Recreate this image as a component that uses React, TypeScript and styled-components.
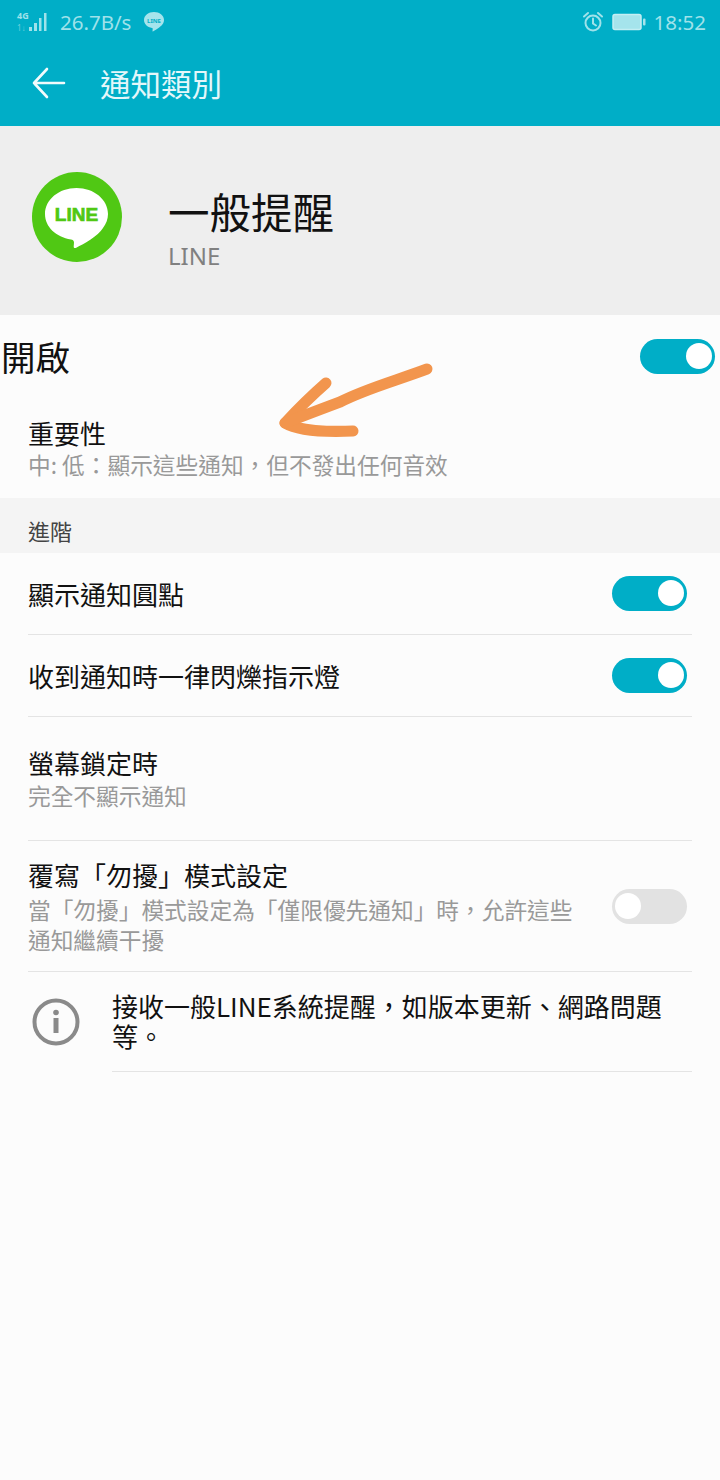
import React from "react";
import styled, { createGlobalStyle } from "styled-components";

const GlobalStyle = createGlobalStyle`
  html, body {
    margin: 0;
    padding: 0;
    background: #fcfcfc;
  }
  * {
    box-sizing: border-box;
  }
`;

const Page = styled.div`
  position: relative;
  width: 720px;
  height: 1480px;
  overflow: hidden;
  background: #fcfcfc;
  font-family: "Noto Sans CJK TC", "Noto Sans", sans-serif;
  color: #111;
`;

const Top = styled.div`
  height: 126px;
  background: #00aec7;
`;

const StatusBar = styled.div`
  height: 44px;
  padding: 0 14px 0 16px;
  display: flex;
  align-items: center;
  justify-content: space-between;
  color: #9fe2ea;
  font-size: 20.5px;
  font-family: "Noto Sans", sans-serif;
`;

const StatusGroup = styled.div<{ $gap: number }>`
  display: flex;
  align-items: center;
  gap: ${(p) => p.$gap}px;
`;

const AppBar = styled.div`
  height: 82px;
  padding: 0 0 4px 32px;
  display: flex;
  align-items: center;
  gap: 34px;
  color: #e4f7fa;
  font-size: 30.5px;
`;

const Header = styled.div`
  height: 189px;
  background: #eeeeee;
  padding: 0 0 8px 32px;
  display: flex;
  align-items: center;
  gap: 46px;
`;

const HeaderText = styled.div`
  display: flex;
  flex-direction: column;
  padding-top: 14px;
`;

const HeaderTitle = styled.div`
  font-size: 41.5px;
  line-height: 58px;
  margin-top: 6px;
`;

const HeaderSub = styled.div`
  font-family: "Noto Sans", sans-serif;
  font-size: 24px;
  line-height: 32px;
  color: #808080;
`;

const EnableRow = styled.div`
  height: 82px;
  padding: 0 5px 0 1px;
  display: flex;
  align-items: center;
  justify-content: space-between;
  font-size: 34.5px;
`;

const PlainRow = styled.div`
  height: 101px;
  padding: 18px 28px 0;
`;

const Section = styled.div`
  height: 55px;
  background: #f4f4f4;
  padding: 15px 28px 0;
  font-size: 22px;
  line-height: 34px;
  color: #444;
`;

const List = styled.div`
  padding: 0 28px;
`;

const Row = styled.div<{ $height: number }>`
  height: ${(p) => p.$height}px;
  padding-right: 5px;
  display: flex;
  align-items: center;
  justify-content: space-between;
  border-bottom: 1px solid #e4e4e4;
`;

const RowText = styled.div<{ $width?: number }>`
  width: ${(p) => (p.$width ? `${p.$width}px` : "auto")};
  margin-top: -1px;
`;

const RowTitle = styled.div`
  font-size: 26px;
  line-height: 36px;
`;

const RowSub = styled.div<{ $gap: number }>`
  font-size: 22.7px;
  line-height: 30px;
  margin-top: ${(p) => p.$gap}px;
  color: #999999;
`;

const SwitchTrack = styled.div<{ $on: boolean }>`
  position: relative;
  width: 75px;
  height: 35px;
  border-radius: 18px;
  flex: none;
  background: ${(p) => (p.$on ? "#00aec7" : "#e2e2e2")};
`;

const SwitchKnob = styled.div<{ $on: boolean }>`
  position: absolute;
  top: 4px;
  left: ${(p) => (p.$on ? "46px" : "3px")};
  width: 26px;
  height: 26px;
  border-radius: 50%;
  background: #fff;
`;

const Info = styled.div`
  padding: 0 28px 0 32px;
  display: flex;
  gap: 32px;
`;

const InfoIcon = styled.div`
  flex: none;
  width: 48px;
  padding-top: 26px;
`;

const InfoText = styled.div`
  flex: 1;
  height: 100px;
  padding-top: 19px;
  font-size: 26px;
  line-height: 30px;
  border-bottom: 1px solid #e4e4e4;
`;

const ArrowMark = styled.svg`
  position: absolute;
  left: 270px;
  top: 355px;
`;

const Switch = ({ on }: { on: boolean }) => (
  <SwitchTrack $on={on}>
    <SwitchKnob $on={on} />
  </SwitchTrack>
);

const SignalIcon = () => (
  <svg width="32" height="24" viewBox="0 0 32 24">
    <text x="1" y="9" fontSize="9" fontWeight="700" fill="#9fe2ea" fontFamily="Noto Sans, sans-serif">4G</text>
    <text x="1" y="21" fontSize="8" fill="#6fd0dc" fontFamily="Noto Sans, sans-serif">1↓</text>
    <rect x="13" y="17" width="3" height="4" fill="#9fe2ea" />
    <rect x="18" y="13" width="3" height="8" fill="#9fe2ea" />
    <rect x="23" y="8" width="2.5" height="13" fill="#9fe2ea" />
    <rect x="28" y="3" width="2.5" height="18" fill="#9fe2ea" />
  </svg>
);

const BubbleIcon = () => (
  <svg width="22" height="22" viewBox="0 0 22 22">
    <path d="M11 1C5.500 1 1 4.500 1 9c0 4 3.400 7.300 8 7.900.6.1.8.5.7 1l-.2 2c0 .5.4.7.9.4 2.800-1.700 8.600-5.300 9.800-8C20.700 11.300 21 10.200 21 9c0-4.500-4.500-8-10-8z" fill="#a5e4ec" />
    <text x="11" y="11.500" textAnchor="middle" fontSize="6" fontWeight="700" fill="#00aec7" fontFamily="Noto Sans, sans-serif">LINE</text>
  </svg>
);

const AlarmIcon = () => (
  <svg width="22" height="22" viewBox="0 0 22 22" fill="none" stroke="#9fe2ea" strokeWidth="2">
    <circle cx="11" cy="12" r="7.500" />
    <path d="M11 7.500V12.500L14 14.500" strokeLinecap="round" />
    <path d="M2 5.500L6 2M20 5.500L16 2" strokeLinecap="round" />
  </svg>
);

const BatteryIcon = () => (
  <svg width="34" height="18" viewBox="0 0 34 18">
    <rect x="1" y="1.500" width="28" height="15" rx="2" fill="#a5e4ec" stroke="#c4eef3" strokeWidth="1.500" />
    <rect x="31" y="5.500" width="2.500" height="7" rx="1" fill="#a5e4ec" />
  </svg>
);

const BackArrow = () => (
  <svg width="34" height="34" viewBox="0 0 34 34" fill="none" stroke="#f2fbfc" strokeWidth="2.600" strokeLinecap="round" strokeLinejoin="round">
    <path d="M2 17H32M15 3L2 17L15 31" />
  </svg>
);

const LineLogo = () => (
  <svg width="90" height="90" viewBox="0 0 90 90">
    <circle cx="45" cy="45" r="45" fill="#50c814" />
    <path d="M44.500 16C27 16 13 27.500 13 42c0 13 11 23 26 25.500 1.500.3 3 1 3 3l-.3 4c0 1.500 1 2 2.500 1.200C52 72 66 64 71 56c3-4 5-9 5-14 0-14.500-14-26-31.500-26z" fill="#fff" />
    <text x="44.500" y="48.500" textAnchor="middle" fontSize="19" fontWeight="700" fill="#50c814" stroke="#50c814" strokeWidth="0.7" fontFamily="Liberation Sans, sans-serif">LINE</text>
  </svg>
);

const InfoGlyph = () => (
  <svg width="48" height="48" viewBox="0 0 48 48">
    <circle cx="24" cy="24" r="21.500" fill="none" stroke="#8a8a8a" strokeWidth="4" />
    <circle cx="24" cy="14.500" r="2.800" fill="#8a8a8a" />
    <rect x="21.500" y="20" width="5" height="15" fill="#8a8a8a" />
  </svg>
);

export default function App() {
  return (
    <Page lang="zh-TW">
      <GlobalStyle />
      <Top>
        <StatusBar>
          <StatusGroup $gap={12}>
            <SignalIcon />
            <span>26.7B/s</span>
            <BubbleIcon />
          </StatusGroup>
          <StatusGroup $gap={8}>
            <AlarmIcon />
            <BatteryIcon />
            <span>18:52</span>
          </StatusGroup>
        </StatusBar>
        <AppBar>
          <BackArrow />
          <span>通知類別</span>
        </AppBar>
      </Top>
      <Header>
        <LineLogo />
        <HeaderText>
          <HeaderTitle>一般提醒</HeaderTitle>
          <HeaderSub>LINE</HeaderSub>
        </HeaderText>
      </Header>
      <EnableRow>
        <span>開啟</span>
        <Switch on />
      </EnableRow>
      <PlainRow>
        <RowTitle>重要性</RowTitle>
        <RowSub $gap={-1}>中: 低：顯示這些通知，但不發出任何音效</RowSub>
      </PlainRow>
      <Section>進階</Section>
      <List>
        <Row $height={82}>
          <RowTitle>顯示通知圓點</RowTitle>
          <Switch on />
        </Row>
        <Row $height={82}>
          <RowTitle>收到通知時一律閃爍指示燈</RowTitle>
          <Switch on />
        </Row>
        <Row $height={124}>
          <RowText>
            <RowTitle>螢幕鎖定時</RowTitle>
            <RowSub $gap={0}>完全不顯示通知</RowSub>
          </RowText>
        </Row>
        <Row $height={131}>
          <RowText $width={552}>
            <RowTitle>覆寫「勿擾」模式設定</RowTitle>
            <RowSub $gap={2}>當「勿擾」模式設定為「僅限優先通知」時，允許這些通知繼續干擾</RowSub>
          </RowText>
          <Switch on={false} />
        </Row>
      </List>
      <Info>
        <InfoIcon>
          <InfoGlyph />
        </InfoIcon>
        <InfoText>接收一般LINE系統提醒，如版本更新、網路問題等。</InfoText>
      </Info>
      <ArrowMark width="170" height="90" viewBox="0 0 170 90" fill="none" stroke="#f2954d" strokeWidth="11" strokeLinecap="round" strokeLinejoin="round">
        <path d="M56 28C40 42 28 54 15 68C28 76 60 77 83 76" />
        <path d="M15 68C30 62 46 56 70 47C95 34 125 26 157 14" />
      </ArrowMark>
    </Page>
  );
}
